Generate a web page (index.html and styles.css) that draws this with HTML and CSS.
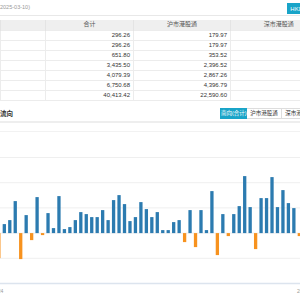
FILE: index.html
```html
<!DOCTYPE html>
<html lang="zh-CN">
<head>
    <meta charset="UTF-8">
    <meta name="viewport" content="width=device-width, initial-scale=1.0">
    <title>南向资金</title>
    <link rel="stylesheet" href="styles.css">
</head>
<body>
    <div class="page">
        <div class="top">
            <span class="date">2025-03-10)</span>
            <button class="cur-btn">HKD</button>
        </div>

        <table class="flow-table">
            <colgroup>
                <col class="c-name">
                <col class="c-sum">
                <col class="c-sh">
                <col class="c-sz">
            </colgroup>
            <thead>
                <tr><th></th><th>合计</th><th>沪市港股通</th><th>深市港股通</th></tr>
            </thead>
            <tbody>
                <tr><td></td><td>296.26</td><td>179.97</td><td></td></tr>
                <tr><td></td><td>296.26</td><td>179.97</td><td></td></tr>
                <tr><td></td><td>651.80</td><td>353.52</td><td></td></tr>
                <tr><td></td><td>3,435.50</td><td>2,396.52</td><td></td></tr>
                <tr><td></td><td>4,079.39</td><td>2,867.26</td><td></td></tr>
                <tr><td></td><td>6,750.68</td><td>4,396.79</td><td></td></tr>
                <tr><td></td><td>40,413.42</td><td>22,590.60</td><td></td></tr>
            </tbody>
        </table>

        <div class="flow-head">
            <h2>流向</h2>
            <div class="tabs">
                <span class="tab tab-all active">南向(合计)</span>
                <span class="tab">沪市港股通</span>
                <span class="tab">深市港股通</span>
            </div>
        </div>
        <div class="legend"></div>

        <svg class="chart" id="chart" width="300" height="169" viewBox="0 0 300 169"></svg>
    </div>

    <script src="chart.js"></script>
</body>
</html>
```

FILE: styles.css
```css
* {
    box-sizing: border-box;
    margin: 0;
    padding: 0;
}

html, body {
    overflow: hidden;
}

body {
    background: #fff;
    color: #333;
    font-family: "Liberation Sans", "Noto Sans CJK SC", sans-serif;
}

.page {
    width: 330px;
}

.top {
    display: flex;
    align-items: flex-end;
    justify-content: space-between;
    height: 16px;
    padding: 0 24px 1px 0;
    border-bottom: 1px solid #e8e8e8;
}

.date {
    align-self: center;
    font-size: 5.5px;
    color: #999;
}

.cur-btn {
    height: 11px;
    padding: 0 3px;
    border: none;
    background: #19a4c8;
    color: #fff;
    font-family: inherit;
    font-size: 6px;
}

.flow-table {
    width: 326px;
    margin-top: 4px;
    border-collapse: collapse;
    table-layout: fixed;
    font-size: 6px;
}

.c-name { width: 45px; }
.c-sum { width: 88px; }
.c-sh { width: 97px; }
.c-sz { width: 96px; }

.flow-table th,
.flow-table td {
    height: 10px;
    padding: 0 3px;
    line-height: 9px;
    white-space: nowrap;
}

.flow-table th {
    background: #efefef;
    font-weight: normal;
    color: #555;
    text-align: center;
    border-left: 1px solid #e4e4e4;
}

.flow-table td {
    text-align: right;
    border: 1px solid #ececec;
}

.flow-head {
    display: flex;
    align-items: center;
    height: 17px;
    margin-top: 5px;
    padding-right: 13px;
    border-bottom: 2px solid #eee;
}

.flow-head h2 {
    font-size: 6.5px;
    font-weight: bold;
    color: #333;
}

.tabs {
    display: flex;
    margin-left: auto;
}

.tab {
    width: 35px;
    height: 11px;
    line-height: 9px;
    border: 1px solid #ddd;
    font-size: 5.5px;
    text-align: center;
    color: #333;
    white-space: nowrap;
}

.tab + .tab {
    border-left: none;
}

.tab-all {
    width: 27px;
}

.tab.active {
    background: #19a4c8;
    border-color: #19a4c8;
    color: #fff;
}

.legend {
    height: 9px;
    border-bottom: 1px solid #f2f2f2;
}

.chart {
    display: block;
}

.chart .grid {
    stroke: #efefef;
    stroke-width: 1;
}

.chart .axis {
    stroke: #dce4ee;
    stroke-width: 1.5;
}

.chart .up {
    fill: #2c7bb0;
}

.chart .down {
    fill: #f7921e;
}

.chart .label {
    font-size: 5px;
    fill: #999;
}
```

FILE: chart.js
```js
// 每日净流入（像素高度，零轴以上为流入）
const values = [-25, 9, 13, 32, -26, 18, -7, 36, -2, 20, 5, 37, 4, 6, 13, 21, 19, 16, 16, 23,
    13, 33, 38, 29, 12, 16, 31, 24, 16, 21, 3, 3, 11, 13, -9, 23, -14, 23, 3, 42,
    -22, 19, -3, 19, 27, 57, 26, -16, 35, 35, 56, 26, 43, 30, 25, -3];

const svg = document.getElementById('chart');
const ns = 'http://www.w3.org/2000/svg';
const zero = 101.1;
const step = 5.463;
const barW = 3.3;

function add(tag, attrs) {
    const el = document.createElementNS(ns, tag);
    for (const k in attrs) el.setAttribute(k, attrs[k]);
    svg.appendChild(el);
    return el;
}

// 网格线
[25.5, 50.7, 75.9, 101.1, 126.3].forEach(y => {
    add('line', { x1: 0, x2: 300, y1: y, y2: y, class: 'grid' });
});
add('line', { x1: 0, x2: 300, y1: 151.5, y2: 151.5, class: 'axis' });

values.forEach((v, i) => {
    const x = -2.79 + step * i;
    add('rect', {
        x: x,
        y: v > 0 ? zero - v : zero,
        width: barW,
        height: Math.abs(v),
        class: v > 0 ? 'up' : 'down'
    });
});

const left = add('text', { x: 3.3, y: 161, class: 'label', 'text-anchor': 'end' });
left.textContent = '2024-09-24';
const right = add('text', { x: 297, y: 161, class: 'label' });
right.textContent = '2025-03-10';
```
